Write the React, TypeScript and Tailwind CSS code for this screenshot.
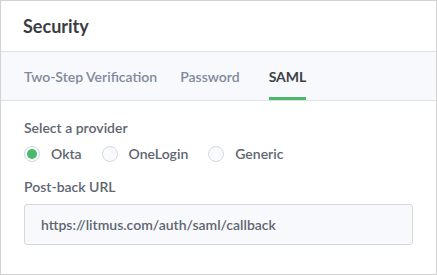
import React from 'react'

const tabs = [
    { label: 'Two-Step Verification', active: false, gap: 'ml-0' },
    { label: 'Password', active: false, gap: 'ml-[23px]' },
    { label: 'SAML', active: true, gap: 'ml-[29px]' },
]

const providers = [
    { label: 'Okta', checked: true },
    { label: 'OneLogin', checked: false },
    { label: 'Generic', checked: false },
]

function Radio({ checked }: { checked: boolean }) {
    return (
        <span className="flex h-4 w-4 items-center justify-center rounded-full border border-[#d3d8df] bg-[#f9fafc]">
            {checked && <span className="h-[10px] w-[10px] rounded-full bg-[#4cb86e]" />}
        </span>
    )
}

export default function App() {
    return (
        <div className="flex h-[275px] w-[437px] flex-col border border-[#d2d2d2] bg-white font-['Lato',sans-serif]">
            {/* Header */}
            <div className="flex h-[51px] items-center border-b border-[#dde1e6] px-[22px]">
                <h2 className="text-[18px] font-bold text-[#3a3d43]">Security</h2>
            </div>

            {/* Tabs */}
            <div className="flex h-[49px] border-b border-[#dde1e6] bg-[#f7f9fc] px-[23px]">
                {tabs.map((tab) => (
                    <div
                        key={tab.label}
                        className={
                            tab.active
                                ? `${tab.gap} flex items-center border-b-[3px] border-[#4cb86e] pt-[3px] text-[14px] font-bold text-[#3d4149]`
                                : `${tab.gap} flex items-center border-b-[3px] border-transparent pt-[3px] text-[14px] font-semibold text-[#7f899b]`
                        }
                    >
                        {tab.label}
                    </div>
                ))}
            </div>

            {/* Body */}
            <div className="flex flex-col px-[23px] pt-[16px] text-[14px] leading-[21px] font-semibold text-[#5e6570]">
                <p>Select a provider</p>
                <div className="mt-[5px] flex items-center gap-[20px]">
                    {providers.map((p) => (
                        <label key={p.label} className="flex items-center gap-[11px]">
                            <Radio checked={p.checked} />
                            {p.label}
                        </label>
                    ))}
                </div>
                <p className="mt-[12px]">Post-back URL</p>
                <div className="mt-[7px] flex h-[41px] items-center rounded-[3px] border border-[#d5d9de] bg-[#f8f9fc] px-[16px]">
                    https://litmus.com/auth/saml/callback
                </div>
            </div>
        </div>
    )
}
